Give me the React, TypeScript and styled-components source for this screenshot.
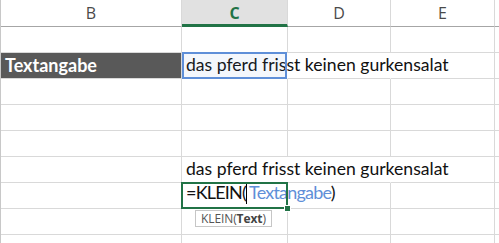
import React from "react";
import styled, { createGlobalStyle, css } from "styled-components";

const GlobalStyle = createGlobalStyle`
  html, body { margin: 0; padding: 0; background: #ffffff; }
  body { font-family: "Lato", "Noto Sans", sans-serif; }
`;

const GRID = "#d9d9d9";
const GREEN = "#217346";
const BLUE = "#5f8fd8";

const Sheet = styled.div`
  display: grid;
  grid-template-columns: 181px 106px 103px 104px 1fr;
  grid-template-rows: 27px repeat(9, 26px);
  width: 499px;
  height: 243px;
  overflow: hidden;
  border-left: 1px solid #c8c8c8;
  box-sizing: border-box;
`;

const HeaderCell = styled.div<{ $active?: boolean }>`
  display: flex;
  align-items: center;
  justify-content: center;
  box-sizing: border-box;
  border-right: 1px solid ${GRID};
  border-bottom: 1px solid #a6a6a6;
  font-family: "Open Sans", "Noto Sans", sans-serif;
  font-size: 16px;
  color: #4a4a4a;
  padding-bottom: 1px;
  ${(p) =>
    p.$active &&
    css`
      background: #e1e1e1;
      color: ${GREEN};
      font-weight: 700;
      border-bottom: 3px solid ${GREEN};
      padding-bottom: 0;
      padding-top: 2px;
    `}
`;

const Cell = styled.div<{ $fill?: string; $noRight?: boolean; $anchor?: boolean }>`
  display: flex;
  align-items: flex-end;
  box-sizing: border-box;
  border-right: 1px solid ${(p) => (p.$noRight ? "transparent" : GRID)};
  border-bottom: 1px solid ${GRID};
  background: ${(p) => p.$fill ?? "transparent"};
  padding: 0 4px 4px;
  min-width: 0;
  ${(p) =>
    p.$anchor &&
    css`
      position: relative;
    `}
`;

const CellText = styled.span<{ $variant?: "label" | "text" | "formula" }>`
  white-space: nowrap;
  font-family: "Lato", "Noto Sans", sans-serif;
  line-height: 18px;
  position: relative;
  z-index: 1;
  color: #111111;
  font-size: 17.6px;
  ${(p) =>
    p.$variant === "label" &&
    css`
      color: #ffffff;
      font-weight: 700;
      font-size: 18px;
    `}
  ${(p) =>
    p.$variant === "formula" &&
    css`
      font-size: 18px;
      letter-spacing: -0.8px;
    `}
`;

const RangeHighlight = styled.div`
  position: absolute;
  left: 0;
  top: -1px;
  right: 0;
  bottom: -1px;
  border: 2px solid ${BLUE};
  background: rgba(95, 143, 216, 0.07);
  z-index: 2;
  pointer-events: none;
`;

const ActiveBorder = styled.div`
  position: absolute;
  left: -1px;
  top: -1px;
  right: -1px;
  bottom: -1px;
  border: 2px solid ${GREEN};
  z-index: 2;
  pointer-events: none;
`;

const FillHandle = styled.div`
  position: absolute;
  right: -4px;
  bottom: -4px;
  width: 5px;
  height: 5px;
  background: ${GREEN};
  box-shadow: 0 0 0 1px #ffffff;
`;

const Caret = styled.span`
  display: inline-block;
  width: 1px;
  height: 20px;
  background: #000000;
  vertical-align: -5px;
  margin: 0 2px 0 0;
`;

const RefText = styled.span`
  color: ${BLUE};
`;

const Tooltip = styled.div`
  position: absolute;
  left: 13px;
  top: calc(100% + 2px);
  height: 17px;
  box-sizing: border-box;
  padding: 0 5px;
  display: flex;
  align-items: center;
  border: 1px solid #c6c6c6;
  background: #ffffff;
  font-family: "Open Sans", "Noto Sans", sans-serif;
  font-size: 12px;
  letter-spacing: -0.1px;
  color: #555555;
  white-space: nowrap;
  z-index: 3;
`;

const Strong = styled.b`
  font-weight: 700;
  color: #444444;
`;

const TEXT = "das pferd frisst keinen gurkensalat";

function EmptyRow() {
  return (
    <>
      <Cell />
      <Cell />
      <Cell />
      <Cell />
      <Cell />
    </>
  );
}

export default function App() {
  return (
    <>
      <GlobalStyle />
      <Sheet>
        <HeaderCell>B</HeaderCell>
        <HeaderCell $active>C</HeaderCell>
        <HeaderCell>D</HeaderCell>
        <HeaderCell>E</HeaderCell>
        <HeaderCell />

        <EmptyRow />

        <Cell $fill="#595959">
          <CellText $variant="label">Textangabe</CellText>
        </Cell>
        <Cell $anchor $noRight>
          <CellText>{TEXT}</CellText>
          <RangeHighlight />
        </Cell>
        <Cell $noRight />
        <Cell />
        <Cell />

        <EmptyRow />
        <EmptyRow />
        <EmptyRow />

        <Cell />
        <Cell $anchor $noRight>
          <CellText>{TEXT}</CellText>
        </Cell>
        <Cell $noRight />
        <Cell />
        <Cell />

        <Cell />
        <Cell $anchor $noRight>
          <CellText $variant="formula">
            =KLEIN(
            <Caret />
            <RefText>Textangabe</RefText>)
          </CellText>
          <ActiveBorder>
            <FillHandle />
          </ActiveBorder>
          <Tooltip>
            KLEIN(<Strong>Text</Strong>)
          </Tooltip>
        </Cell>
        <Cell />
        <Cell />
        <Cell />

        <EmptyRow />
        <EmptyRow />
      </Sheet>
    </>
  );
}
